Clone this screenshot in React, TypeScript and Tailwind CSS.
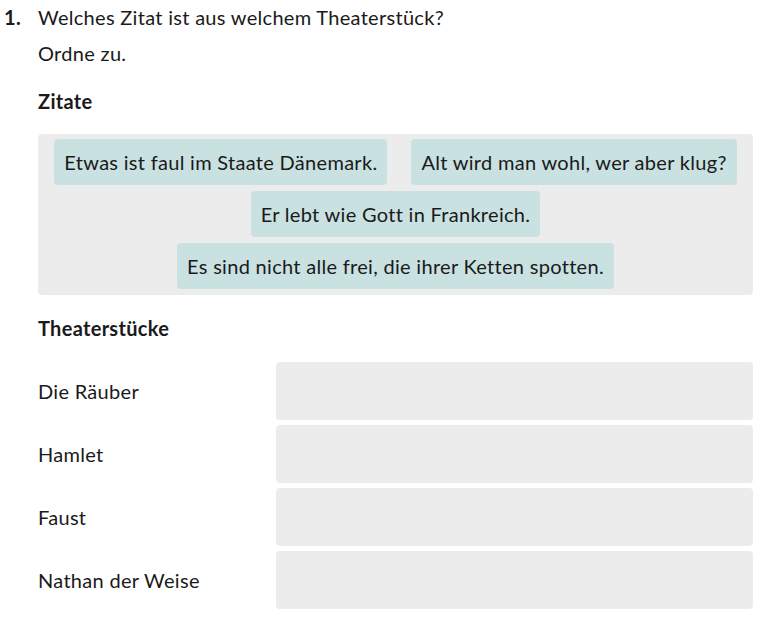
import React from "react";

const quotes = [
  "Etwas ist faul im Staate Dänemark.",
  "Alt wird man wohl, wer aber klug?",
  "Er lebt wie Gott in Frankreich.",
  "Es sind nicht alle frei, die ihrer Ketten spotten.",
];

const plays = ["Die Räuber", "Hamlet", "Faust", "Nathan der Weise"];

export default function App() {
  return (
    <div
      className="min-h-screen bg-white text-[#1a1a1a] text-[20px] leading-[26px] tracking-[0.3px]"
      style={{ fontFamily: "Lato, 'Noto Sans', sans-serif" }}
    >
      <div className="flex pt-1 pl-1 pr-2">
        <div className="w-[34px] shrink-0 font-bold">1.</div>
        <div className="flex-1 min-w-0">
          <p>Welches Zitat ist aus welchem Theaterstück?</p>
          <p className="mt-[10px]">Ordne zu.</p>
          <h3 className="mt-[22px] font-bold">Zitate</h3>
          <div className="mt-[20px] flex flex-wrap justify-center gap-x-[24px] gap-y-[6px] rounded bg-[#ececec] pt-[5px] pb-[6px]">
            {quotes.map((q) => (
              <div
                key={q}
                className="rounded bg-[#c9e1e1] px-[10px] py-[10px] leading-[26px]"
              >
                {q}
              </div>
            ))}
          </div>
          <h3 className="mt-[20px] font-bold">Theaterstücke</h3>
          <div className="mt-[21px] flex flex-col gap-[5px]">
            {plays.map((p) => (
              <div key={p} className="flex items-center">
                <div className="w-[238px] shrink-0">{p}</div>
                <div className="h-[58px] flex-1 rounded bg-[#ececec]" />
              </div>
            ))}
          </div>
        </div>
      </div>
    </div>
  );
}
